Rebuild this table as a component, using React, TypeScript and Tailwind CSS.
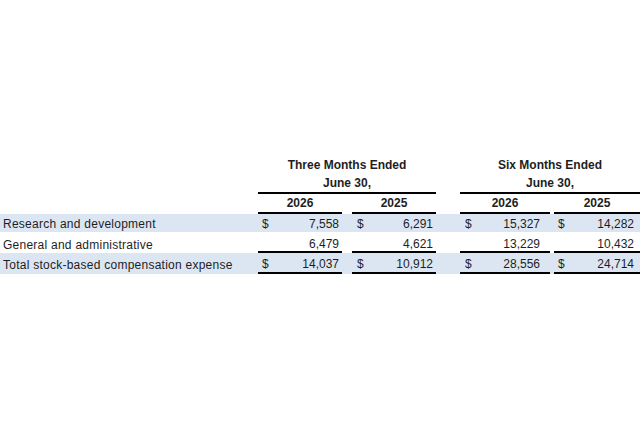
const cols = "grid grid-cols-[258px_84px_10px_84px_24px_90px_4px_86px]";

type Cell = { value: string; dollar?: boolean };

const rows: { label: string; cells: Cell[]; shaded: boolean; kind: "plain" | "sub" | "total" }[] = [
  {
    label: "Research and development",
    shaded: true,
    kind: "plain",
    cells: [
      { value: "7,558", dollar: true },
      { value: "6,291", dollar: true },
      { value: "15,327", dollar: true },
      { value: "14,282", dollar: true },
    ],
  },
  {
    label: "General and administrative",
    shaded: false,
    kind: "sub",
    cells: [{ value: "6,479" }, { value: "4,621" }, { value: "13,229" }, { value: "10,432" }],
  },
  {
    label: "Total stock-based compensation expense",
    shaded: true,
    kind: "total",
    cells: [
      { value: "14,037", dollar: true },
      { value: "10,912", dollar: true },
      { value: "28,556", dollar: true },
      { value: "24,714", dollar: true },
    ],
  },
];

// padding per value column so "$" and figures land where the sheet puts them
const pad = ["pl-[4px] pr-[3px]", "pl-[5px] pr-[3px]", "pl-[5px] pr-[10px]", "pl-[4px] pr-[6px]"];

const DataRow = ({ row }: { row: (typeof rows)[number] }) => {
  const line = row.kind === "plain" ? "" : "border-b-2 border-black";
  const height = row.kind === "plain" ? "h-[18px]" : "h-[21px]";
  // the sheet sits the text of bordered rows a little low
  const shift = row.kind === "sub" ? "pt-[5px]" : row.kind === "total" ? "pt-[3px]" : "pt-[1px]";
  const cell = (c: Cell, i: number) => (
    <div key={i} className={`flex items-center justify-between ${pad[i]} ${line} ${shift}`}>
      <span>{c.dollar ? "$" : ""}</span>
      <span>{c.value}</span>
    </div>
  );
  return (
    <div className={`${cols} ${height} ${row.shaded ? "bg-[#dce6f3]" : ""}`}>
      <div className={`flex items-center pl-[3px] tracking-[0.25px] ${shift}`}>{row.label}</div>
      {cell(row.cells[0], 0)}
      <div />
      {cell(row.cells[1], 1)}
      <div />
      {cell(row.cells[2], 2)}
      <div />
      {cell(row.cells[3], 3)}
    </div>
  );
};

export default function App() {
  return (
    <div className="w-[640px] h-[440px] bg-white pt-[155px] text-[12px] leading-none text-[#1e1e1e] font-['Liberation_Sans',Arial,sans-serif]">
      <div className="font-bold">
        <div className={`${cols} h-[19px]`}>
          <div />
          <div className="col-span-3 flex items-center justify-center pt-[1px]">Three Months Ended</div>
          <div />
          <div className="col-span-3 flex items-center justify-center pt-[1px]">Six Months Ended</div>
        </div>
        <div className={`${cols} h-[20px]`}>
          <div />
          <div className="col-span-3 flex items-center justify-center border-b-2 border-black">June 30,</div>
          <div />
          <div className="col-span-3 flex items-center justify-center border-b-2 border-black">June 30,</div>
        </div>
        <div className={`${cols} h-[20px]`}>
          <div />
          <div className="flex items-center justify-center border-b-2 border-black">2026</div>
          <div />
          <div className="flex items-center justify-center border-b-2 border-black">2025</div>
          <div />
          <div className="flex items-center justify-center border-b-2 border-black">2026</div>
          <div />
          <div className="flex items-center justify-center border-b-2 border-black">2025</div>
        </div>
      </div>
      {rows.map((r) => (
        <DataRow key={r.label} row={r} />
      ))}
    </div>
  );
}
